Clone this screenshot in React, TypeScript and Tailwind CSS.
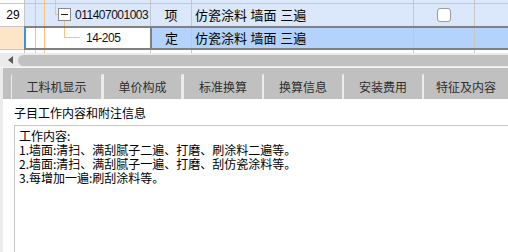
import React from 'react';

const tabs: { label: string; cls: string }[] = [
  { label: '工料机显示', cls: 'w-[90px] border-l' },
  { label: '单价构成', cls: 'w-[80px] border-l-[3px]' },
  { label: '标准换算', cls: 'w-[81px] border-l-[3px]' },
  { label: '换算信息', cls: 'w-[80px] border-l-2' },
  { label: '安装费用', cls: 'w-[80px] border-l-2' },
  { label: '特征及内容', cls: 'w-[86px] border-l-2' },
];

const lines = [
  '工作内容:',
  '1.墙面:清扫、满刮腻子二遍、打磨、刷涂料二遍等。',
  '2.墙面:清扫、满刮腻子一遍、打磨、刮仿瓷涂料等。',
  '3.每增加一遍:刷刮涂料等。',
];

export default function App() {
  return (
    <div className="w-[508px] h-[252px] overflow-hidden bg-white flex flex-col text-black [font-family:'Liberation_Sans','Noto_Sans_CJK_SC',sans-serif]">
      {/* previous row remainder */}
      <div className="flex h-[3px] shrink-0">
        <div className="w-[25px] shrink-0 bg-white border-r border-[#c6c6c6]" />
        <div className="w-[126px] shrink-0 flex bg-[#dbe7fb] border-r border-[#c6c6c6]">
          <div className="w-[10px] shrink-0" />
          <div className="w-[9px] shrink-0 border-l border-[#f9c37f]" />
          <div className="w-[11px] shrink-0 border-l border-[#f9c37f]" />
          <div className="w-px shrink-0 bg-[#f9c37f]" />
        </div>
        <div className="w-[41px] shrink-0 bg-[#dbe7fb] border-r border-[#c6c6c6]" />
        <div className="w-[222px] shrink-0 bg-[#dbe7fb] border-r border-[#c6c6c6]" />
        <div className="w-[61px] shrink-0 bg-[#dbe7fb] border-r border-[#c6c6c6]" />
        <div className="flex-1 bg-[#dbe7fb]" />
      </div>
      <div className="h-px shrink-0 bg-[#c6c6c6]" />

      {/* row 29 */}
      <div className="flex h-[22px] shrink-0 text-[13px] leading-none">
        <div className="w-[25px] shrink-0 bg-white border-r border-[#c6c6c6] flex items-center justify-center pl-[2px] text-[12px]">
          29
        </div>
        <div className="w-[126px] shrink-0 flex bg-[#dbe7fb] border-r border-[#c6c6c6]">
          <div className="w-[10px] shrink-0" />
          <div className="w-[9px] shrink-0 border-l border-[#f9c37f]" />
          <div className="w-[11px] shrink-0 border-l border-[#f9c37f]" />
          <div className="w-[3px] h-[11px] shrink-0 border-l border-b border-[#f9c37f]" />
          <div className="w-[13px] shrink-0 flex flex-col items-center pt-[4px]">
            <div className="w-[13px] h-[13px] shrink-0 border border-[#8a8a8a] bg-white flex items-center justify-center">
              <div className="w-[7px] h-px bg-[#202020]" />
            </div>
            <div className="flex-1 w-px bg-[#f9c37f]" />
          </div>
          <div className="ml-[4px] flex items-center text-[12px] tracking-[-0.5px] text-[#111]">011407001003</div>
        </div>
        <div className="w-[41px] shrink-0 bg-[#dbe7fb] border-r border-[#c6c6c6] flex items-center justify-center">
          项
        </div>
        <div className="w-[222px] shrink-0 bg-[#dbe7fb] border-r border-[#c6c6c6] flex items-center pl-[3px] whitespace-pre">
          仿瓷涂料 墙面 三遍
        </div>
        <div className="w-[61px] shrink-0 bg-[#dbe7fb] border-r border-[#c6c6c6] flex items-center justify-center">
          <div className="w-[14px] h-[14px] rounded-[3px] border border-[#9d9d9d] bg-white" />
        </div>
        <div className="flex-1 bg-[#dbe7fb]" />
      </div>

      {/* dark line */}
      <div className="flex h-[2px] shrink-0">
        <div className="w-[24px] shrink-0 bg-[#fde6c8] border-t border-[#c6c6c6]" />
        <div className="flex-1 bg-[#808080]" />
      </div>

      {/* row 14-205 (selected) */}
      <div className="flex h-[20px] shrink-0 text-[13px] leading-none">
        <div className="w-[24px] shrink-0 bg-[#fde6c8]" />
        <div className="w-[2px] shrink-0 bg-[#3d8ef0]" />
        <div className="w-[126px] shrink-0 flex bg-white border-r-2 border-[#808080]">
          <div className="w-[9px] shrink-0" />
          <div className="w-[9px] shrink-0 border-l border-[#f9c37f]" />
          <div className="w-[20px] shrink-0 border-l border-[#f9c37f]" />
          <div className="w-[16px] h-[10px] shrink-0 border-l border-b border-[#f9c37f]" />
          <div className="ml-[6px] flex items-center text-[12px] tracking-[-0.5px] text-[#111]">14-205</div>
        </div>
        <div className="w-[40px] shrink-0 bg-[#b3d3fc] border-r border-[#c6c6c6] flex items-center justify-center">
          定
        </div>
        <div className="w-[222px] shrink-0 bg-[#b3d3fc] border-r border-[#c6c6c6] flex items-center pl-[3px] whitespace-pre">
          仿瓷涂料 墙面 三遍
        </div>
        <div className="w-[61px] shrink-0 bg-[#b3d3fc] border-r border-[#c6c6c6]" />
        <div className="flex-1 bg-[#b3d3fc]" />
      </div>

      {/* dark line */}
      <div className="flex h-[2px] shrink-0">
        <div className="w-[24px] shrink-0 bg-[#fde6c8] border-b border-[#c6c6c6]" />
        <div className="flex-1 bg-[#808080]" />
      </div>

      {/* empty strip below rows */}
      <div className="flex h-[3px] shrink-0 bg-white">
        <div className="w-[25px] shrink-0 border-r border-[#c6c6c6]" />
        <div className="w-[126px] shrink-0 flex border-r border-[#c6c6c6]">
          <div className="w-[10px] shrink-0" />
          <div className="w-[9px] shrink-0 border-l border-[#f9c37f]" />
          <div className="w-[11px] shrink-0 border-l border-[#f9c37f]" />
        </div>
        <div className="w-[41px] shrink-0 border-r border-[#c6c6c6]" />
        <div className="w-[222px] shrink-0 border-r border-[#c6c6c6]" />
        <div className="w-[61px] shrink-0 border-r border-[#c6c6c6]" />
        <div className="flex-1" />
      </div>

      {/* horizontal scrollbar */}
      <div className="flex h-[14px] shrink-0 bg-[#ebebeb]">
        <div className="w-[18px] shrink-0 flex items-center pl-[8px]">
          <svg width="5" height="8" viewBox="0 0 5 8">
            <polygon points="5,0 5,8 0,4" fill="#5a5a5a" />
          </svg>
        </div>
        <div className="flex-1 pt-[2px] pb-px">
          <div className="h-full rounded-l-[6px] bg-[#c1c1c1]" />
        </div>
      </div>
      <div className="h-px shrink-0 bg-[#f6f6f6]" />

      {/* bottom panel */}
      <div className="flex flex-1 min-h-0">
        <div className="w-[3px] shrink-0 bg-[#ececec]" />
        <div className="flex-1 flex flex-col min-w-0">
          {/* tabs */}
          <div className="h-[31px] shrink-0 bg-[#c0c0c0] pt-[6px] pl-[8px] flex">
            {tabs.map((t) => (
              <div
                key={t.label}
                className={`${t.cls} shrink-0 h-[25px] border-[#ececec] rounded-tl-[2px] bg-[#c0c0c0] flex items-center justify-center text-[12px] leading-none text-[#2e2e2e] [font-family:'Noto_Sans_CJK_SC',sans-serif]`}
              >
                {t.label}
              </div>
            ))}
          </div>
          {/* content */}
          <div className="flex-1 flex flex-col bg-white min-h-0">
            <div className="pt-[7px] pl-[11px] text-[12px] leading-[14px] [font-family:'Noto_Sans_CJK_SC',sans-serif]">
              子目工作内容和附注信息
            </div>
            <div className="ml-[11px] mt-[5px] flex-1 border-t border-l border-[#c8c8c8] pl-[4px] pt-[3px] text-[12px] leading-[14px] [font-family:'Noto_Sans_CJK_SC',sans-serif]">
              {lines.map((l) => (
                <div key={l} className="whitespace-nowrap">
                  {l}
                </div>
              ))}
            </div>
          </div>
        </div>
      </div>
    </div>
  );
}
